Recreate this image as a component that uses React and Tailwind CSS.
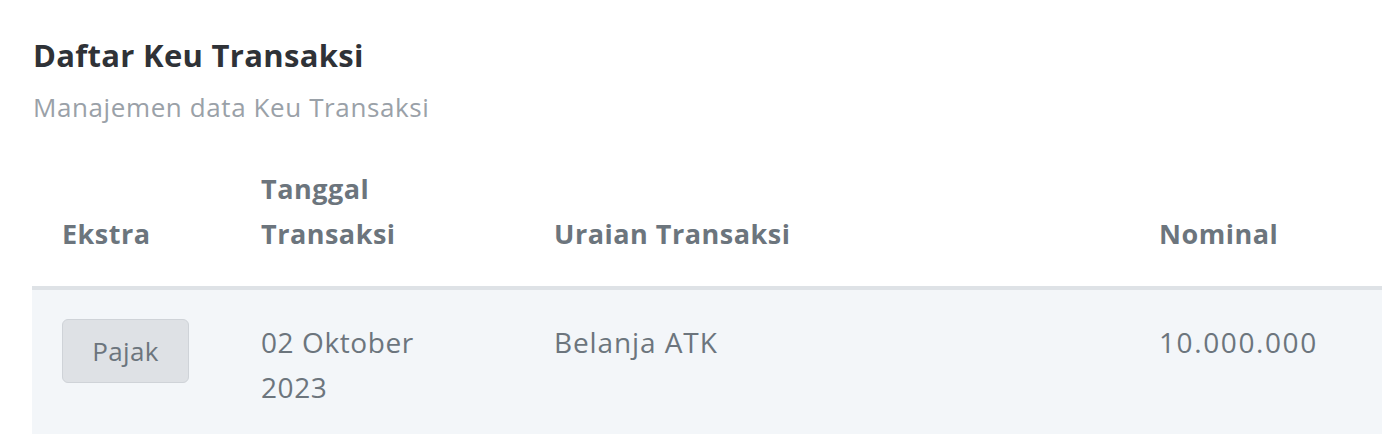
import React from 'react';

const rows = [
  { ekstra: 'Pajak', tanggal: '02 Oktober 2023', uraian: 'Belanja ATK', nominal: '10.000.000' },
];

const App = () => {
  return (
    <div className="w-[1382px] h-[434px] overflow-hidden bg-white font-['Open_Sans',sans-serif]">
      {/* judul */}
      <div className="pl-[33px] pt-[34px]">
        <h1 className="text-[31px] leading-[42px] font-bold tracking-[0.3px] text-[#2f3237]">Daftar Keu Transaksi</h1>
        <p className="mt-[14px] text-[26px] leading-[34px] tracking-[0.6px] text-[#9aa1a8]">Manajemen data Keu Transaksi</p>
      </div>

      <div className="pl-[32px] mt-[12px]">
        <table className="table-fixed border-collapse w-[1600px] text-[28px] leading-[45px] tracking-[0.9px] text-[#6c757d]">
          <colgroup>
            <col className="w-[199px]" />
            <col className="w-[293px]" />
            <col className="w-[605px]" />
            <col className="w-[250px]" />
            <col />
          </colgroup>
          <thead>
            <tr className="border-b-4 border-[#dee2e6] text-[27px] tracking-[0.5px]">
              <th className="p-[30px] text-left align-bottom font-bold">Ekstra</th>
              <th className="p-[30px] text-left align-bottom font-bold">
                <div className="max-w-[200px]">Tanggal Transaksi</div>
              </th>
              <th className="p-[30px] text-left align-bottom font-bold">Uraian Transaksi</th>
              <th className="p-[30px] text-left align-bottom font-bold">Nominal</th>
              <th className="p-[30px]"></th>
            </tr>
          </thead>
          <tbody>
            {rows.map((r, i) => (
              <tr key={i} className="bg-[#f3f6f9]">
                <td className="p-[30px] align-top">
                  <button className="h-[64px] w-[127px] -mt-[1px] border border-[#cfd3d8] bg-[#dee1e5] rounded-[6px] text-[26px] tracking-[0.3px] text-[#6c757d] leading-none">
                    {r.ekstra}
                  </button>
                </td>
                <td className="p-[30px] align-top">
                  <div className="max-w-[200px] tracking-[0.6px]">{r.tanggal}</div>
                </td>
                <td className="p-[30px] align-top">{r.uraian}</td>
                <td className="p-[30px] align-top tracking-[1.6px]">{r.nominal}</td>
                <td className="p-[30px]"></td>
              </tr>
            ))}
          </tbody>
        </table>
      </div>
    </div>
  );
};

export default App;
